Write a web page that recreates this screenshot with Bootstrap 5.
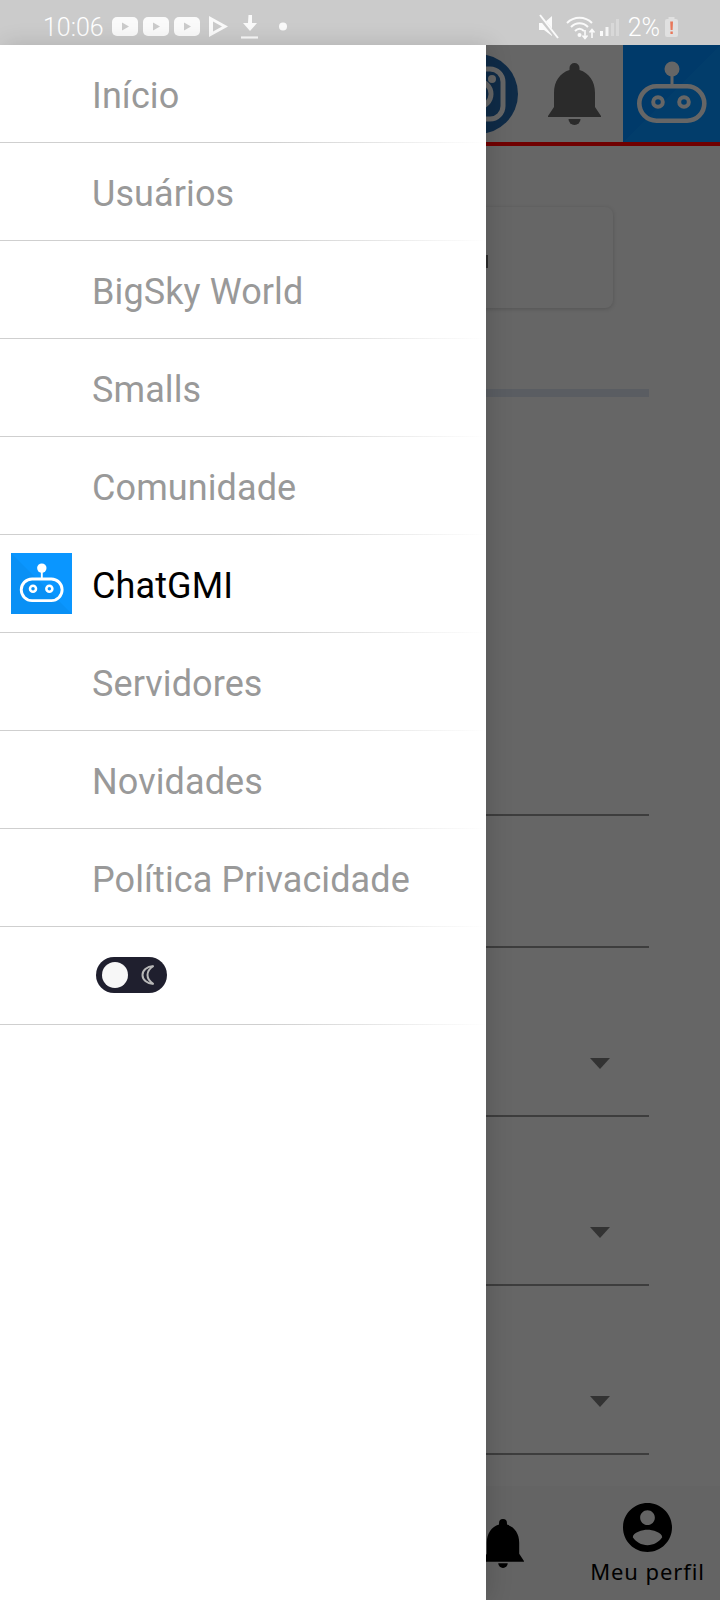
<!DOCTYPE html>
<html lang="pt-BR">
    <head>
        <meta charset="UTF-8" />
        <title>ChatGMI</title>
        <link href="https://cdn.jsdelivr.net/npm/bootstrap@5.3.0/dist/css/bootstrap.min.css" rel="stylesheet" />
        <style>
            body {
                background: #666;
                font-family: Roboto, "Liberation Sans", sans-serif;
            }
            .app-screen {
                width: 720px;
                height: 1600px;
                overflow: hidden;
                background: #666;
            }
            /* status bar */
            .status-strip {
                height: 45px;
                background: #cbcbcb;
                color: #fff;
                padding-left: 43px;
                padding-right: 42px;
                padding-top: 9px;
            }
            .status-time {
                font-size: 25px;
                font-weight: 300;
                line-height: 1;
                width: 69px;
            }
            .status-pct {
                font-size: 25px;
                font-weight: 300;
                line-height: 1;
                margin-right: 5px;
            }
            /* page under the drawer */
            .top-header {
                height: 97px;
            }
            .insta-icon {
                margin-right: 30px;
            }
            .top-bell {
                margin-right: 22px;
            }
            .bot-box {
                width: 97px;
                height: 97px;
                background: linear-gradient(135deg, #003a6a 50%, #023d6b 50%);
            }
            .red-rule {
                height: 4px;
                background: #700000;
            }
            .under-body {
                padding-left: 72px;
                padding-right: 71px;
                padding-top: 61px;
                height: 1340px;
            }
            .ghost-card {
                height: 101px;
                width: 541px;
                border-radius: 8px;
                box-shadow: 0 1px 4px rgba(0, 0, 0, 0.18);
                padding-top: 48px;
            }
            .ghost-text {
                width: 416px;
                height: 13px;
                background: #2c2c2c;
            }
            .ghost-progress {
                height: 8px;
                margin-top: 81px;
                background: #5a5d62;
            }
            .field-line {
                border-bottom: 2px solid #3d3d3d;
            }
            .field-1 { height: 419px; }
            .field-2 { height: 132px; }
            .field-3 { height: 169px; }
            .field-4 { height: 169px; }
            .field-5 { height: 169px; }
            .field-caret {
                width: 0;
                height: 0;
                margin-right: 39px;
                margin-bottom: 46px;
                border-left: 10px solid transparent;
                border-right: 10px solid transparent;
                border-top: 11px solid #333;
            }
            .bottom-bar {
                height: 114px;
                background: #646464;
            }
            .bottom-bell {
                left: 482px;
                top: 33px;
            }
            .profile-tab {
                width: 113px;
                margin-left: auto;
                margin-right: 16px;
                padding-top: 17px;
            }
            .profile-icon {
                width: 49px;
                height: 49px;
            }
            .profile-label {
                font-family: "Noto Sans", sans-serif;
                font-size: 22px;
                line-height: 1;
                letter-spacing: 0.9px;
                color: #000;
                white-space: nowrap;
            }
            /* drawer */
            .side-drawer {
                top: 45px;
                left: 0;
                bottom: 0;
                width: 486px;
                background: #fff;
                box-shadow: 4px 0 22px rgba(0, 0, 0, 0.14);
            }
            .drawer-row {
                height: 98px;
                border-bottom: 1px solid;
                border-image: linear-gradient(90deg, #cfcfcf 0, #cfcfcf 55%, #fff 100%) 1;
                font-size: 36px;
                letter-spacing: 0.1px;
                color: #999;
                padding-left: 92px;
                padding-top: 4px;
            }
            .drawer-row.is-active {
                color: #000;
                padding-left: 11px;
            }
            .drawer-row.is-active svg {
                margin-right: 20px;
                margin-top: -4px;
            }
            .theme-toggle {
                width: 71px;
                height: 36px;
                margin-left: 4px;
                margin-top: -6px;
                border-radius: 18px;
                background: #1f1f2e;
                padding-left: 6px;
                padding-right: 12px;
            }
            .toggle-knob {
                width: 26px;
                height: 26px;
                border-radius: 50%;
                background: #f7f7f7;
            }
        </style>
    </head>
    <body>
        <div class="app-screen position-relative">
            <!-- Status bar -->
            <div class="status-strip d-flex align-items-center">
                <span class="status-time">10:06</span>
                <svg width="176" height="28" viewBox="0 0 176 28">
                    <g fill="#fafafa">
                        <rect x="0" y="4" width="26" height="19" rx="5" />
                        <rect x="31" y="4" width="26" height="19" rx="5" />
                        <rect x="62" y="4" width="26" height="19" rx="5" />
                    </g>
                    <g fill="#cbcbcb">
                        <path d="M10 9.500l7 4-7 4z" />
                        <path d="M41 9.500l7 4-7 4z" />
                        <path d="M72 9.500l7 4-7 4z" />
                    </g>
                    <path fill="#fafafa" fill-rule="evenodd" d="M97 3l19 10.500L97 24zM101 8.500v10l9-5z" />
                    <path fill="#fafafa" d="M136.500 2h3.500v8h5l-7 8-7-8h5z" />
                    <path d="M129 24.500h17" stroke="#fafafa" stroke-width="2.200" />
                    <circle cx="171" cy="13.500" r="4" fill="#fafafa" />
                </svg>
                <div class="d-flex align-items-center ms-auto">
                    <svg width="90" height="28" viewBox="0 0 90 28">
                        <path d="M1 10h5l8-7v20l-8-6H1z" fill="#fafafa" />
                        <path d="M1 3l18 22" stroke="#cbcbcb" stroke-width="4" />
                        <path d="M2 2l18 23" stroke="#fafafa" stroke-width="2" />
                        <g fill="none" stroke="#fafafa" stroke-width="2">
                            <path d="M29 10c7-7 18-7 25 0" />
                            <path d="M33 14c5-5 12-5 17 0" />
                            <path d="M37 18c3-3 6-3 9 0" />
                        </g>
                        <circle cx="41.500" cy="22" r="2" fill="#fafafa" />
                        <path d="M47 17v8M44.500 22.500l2.500 3 2.500-3M54 25v-8M51.500 19.500l2.500-3 2.500 3" fill="none" stroke="#fafafa" stroke-width="1.600" />
                        <rect x="62" y="18" width="3" height="5" fill="#fafafa" />
                        <rect x="67.500" y="14" width="3" height="9" fill="#f4f4f4" />
                        <rect x="73" y="10" width="3" height="13" fill="#d8d8d8" />
                        <rect x="78" y="6" width="3" height="17" fill="#d8d8d8" />
                    </svg>
                    <span class="status-pct">2%</span>
                    <svg width="13" height="20" viewBox="0 0 13 20">
                        <rect x="3.500" y="0" width="6" height="2" fill="#e0e0e0" />
                        <rect x="0" y="2" width="13" height="18" rx="2" fill="#e0e0e0" />
                        <path d="M5.200 4.500h2.800l-.4 8.500H5.600zM5.400 14.500h2.400v2.500H5.400z" fill="#e8775a" />
                    </svg>
                </div>
            </div>

            <!-- Page behind the drawer -->
            <div class="top-header d-flex align-items-center justify-content-end">
                <svg class="insta-icon" width="80" height="80" viewBox="0 0 80 80">
                    <circle cx="40" cy="40" r="40" fill="#0f2b47" />
                    <rect x="15" y="15" width="50" height="50" rx="13" fill="none" stroke="#666" stroke-width="5" />
                    <circle cx="40" cy="40" r="13" fill="none" stroke="#666" stroke-width="5" />
                    <circle cx="54" cy="25" r="4" fill="#666" />
                </svg>
                <svg class="top-bell" width="53" height="62" viewBox="0 0 53 62">
                    <path fill="#2b2b2b" d="M26.500 0a5 5 0 0 1 5 5v2C41 10 47 18 47 30v14l6 9v1H0v-1l6-9V30C6 18 12 10 21.500 7V5a5 5 0 0 1 5-5z" />
                    <path fill="#2b2b2b" d="M20.500 56h12a6 6 0 0 1-12 0z" />
                </svg>
                <div class="bot-box">
                    <svg width="97" height="97" viewBox="0 0 97 97">
                        <circle cx="49" cy="24" r="7.500" fill="#666" />
                        <path d="M49 30v10" stroke="#666" stroke-width="3" />
                        <rect x="16.300" y="41.300" width="65" height="34.400" rx="17.200" fill="none" stroke="#666" stroke-width="4.600" />
                        <circle cx="35" cy="57" r="4.800" fill="none" stroke="#666" stroke-width="4" />
                        <circle cx="61" cy="57" r="4.800" fill="none" stroke="#666" stroke-width="4" />
                    </svg>
                </div>
            </div>
            <div class="red-rule"></div>
            <div class="under-body">
                <div class="ghost-card">
                    <div class="ghost-text"></div>
                </div>
                <div class="ghost-progress"></div>
                <div class="field-line field-1"></div>
                <div class="field-line field-2"></div>
                <div class="field-line field-3 d-flex align-items-end justify-content-end"><span class="field-caret"></span></div>
                <div class="field-line field-4 d-flex align-items-end justify-content-end"><span class="field-caret"></span></div>
                <div class="field-line field-5 d-flex align-items-end justify-content-end"><span class="field-caret"></span></div>
            </div>
            <div class="bottom-bar d-flex position-relative">
                <svg class="bottom-bell position-absolute" width="42" height="49" viewBox="0 0 53 62">
                    <path d="M26.500 0a5 5 0 0 1 5 5v2C41 10 47 18 47 30v14l6 9v1H0v-1l6-9V30C6 18 12 10 21.500 7V5a5 5 0 0 1 5-5z" />
                    <path d="M20.500 56h12a6 6 0 0 1-12 0z" />
                </svg>
                <div class="profile-tab d-flex flex-column align-items-center">
                    <svg class="profile-icon" viewBox="2 2 20 20">
                        <path d="M12 2C6.480 2 2 6.480 2 12s4.480 10 10 10 10-4.480 10-10S17.520 2 12 2zm0 3c1.660 0 3 1.340 3 3s-1.340 3-3 3-3-1.340-3-3 1.340-3 3-3zm0 14.200c-2.500 0-4.710-1.280-6-3.220.030-1.990 4-3.080 6-3.080 1.990 0 5.970 1.090 6 3.080-1.290 1.940-3.500 3.220-6 3.220z" />
                    </svg>
                    <span class="profile-label mt-2">Meu perfil</span>
                </div>
            </div>

            <!-- Drawer -->
            <nav class="side-drawer position-absolute">
                <div class="drawer-row d-flex align-items-center">Início</div>
                <div class="drawer-row d-flex align-items-center">Usuários</div>
                <div class="drawer-row d-flex align-items-center">BigSky World</div>
                <div class="drawer-row d-flex align-items-center">Smalls</div>
                <div class="drawer-row d-flex align-items-center">Comunidade</div>
                <div class="drawer-row is-active d-flex align-items-center">
                    <svg width="61" height="61" viewBox="0 0 97 97">
                        <rect width="97" height="97" fill="#0a96ff" />
                        <path d="M0 0L97 97H0z" fill="#0990f5" />
                        <circle cx="49" cy="24" r="7.500" fill="#fff" />
                        <path d="M49 30v10" stroke="#fff" stroke-width="3" />
                        <rect x="16.300" y="41.300" width="65" height="34.400" rx="17.200" fill="none" stroke="#fff" stroke-width="4.600" />
                        <circle cx="35" cy="57" r="4.800" fill="none" stroke="#fff" stroke-width="4" />
                        <circle cx="61" cy="57" r="4.800" fill="none" stroke="#fff" stroke-width="4" />
                    </svg>
                    ChatGMI
                </div>
                <div class="drawer-row d-flex align-items-center">Servidores</div>
                <div class="drawer-row d-flex align-items-center">Novidades</div>
                <div class="drawer-row d-flex align-items-center">Política Privacidade</div>
                <div class="drawer-row d-flex align-items-center">
                    <div class="theme-toggle d-flex align-items-center justify-content-between">
                        <span class="toggle-knob"></span>
                        <svg width="14" height="20" viewBox="0 0 14 20">
                            <path d="M12.500 1C5.500 1.500 1.500 5.500 1.500 10s4 8.500 11 9C8.500 16.500 6.500 13.500 6.500 10S8.500 3.500 12.500 1z" fill="none" stroke="#b8b8b8" stroke-width="2" />
                        </svg>
                    </div>
                </div>
            </nav>
        </div>

        <script src="https://cdn.jsdelivr.net/npm/bootstrap@5.3.0/dist/js/bootstrap.bundle.min.js"></script>
    </body>
</html>
